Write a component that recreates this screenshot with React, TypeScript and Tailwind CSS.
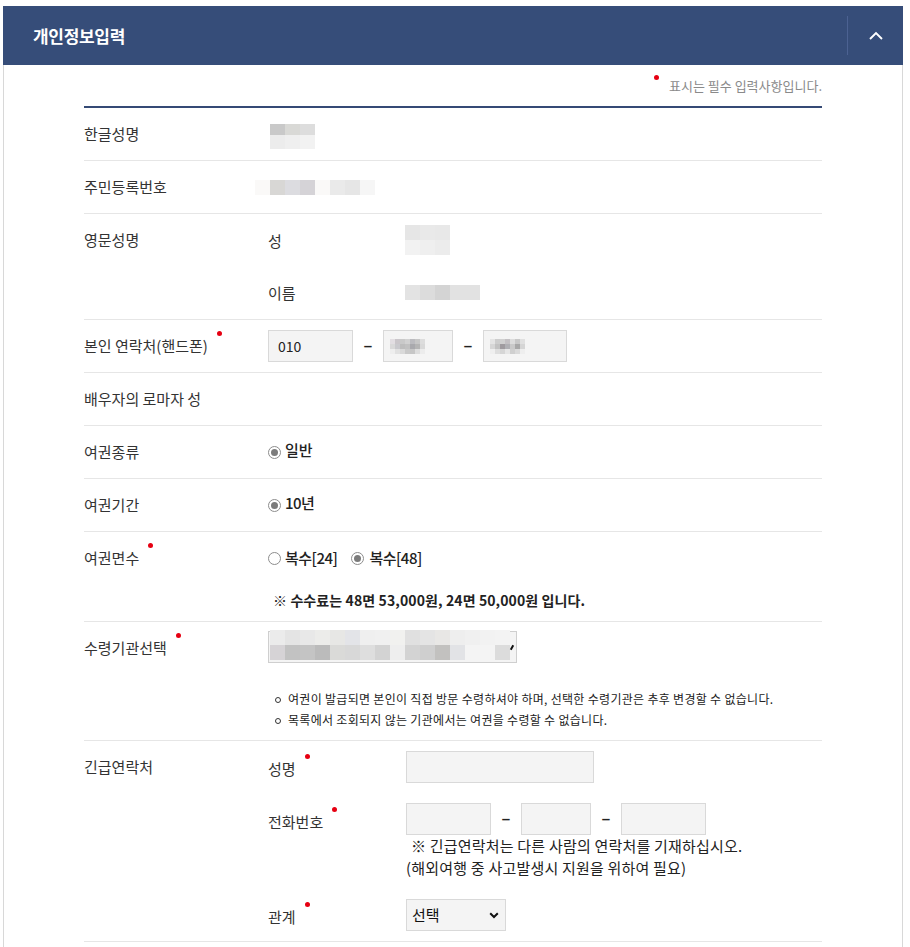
import React from "react";

type PixProps = { cols: number[]; rows: number[]; colors: string[][] };
const Pix = ({ cols, rows, colors }: PixProps) => (
  <div className="flex flex-col">
    {colors.map((r, i) => (
      <div className="flex" key={i}>
        {r.map((c, j) => (
          <div key={j} style={{ width: cols[j], height: rows[i], background: c }} />
        ))}
      </div>
    ))}
  </div>
);

const Dot = () => (
  <span className="absolute -right-[14px] -top-[5px] h-[5px] w-[5px] rounded-full bg-[#e60012]" />
);

const Req = ({ children }: { children: React.ReactNode }) => (
  <span className="relative inline-block leading-[20px]">
    {children}
    <Dot />
  </span>
);

const Radio = ({ checked }: { checked?: boolean }) => (
  <span className="flex h-[13px] w-[13px] shrink-0 items-center justify-center rounded-full border border-[#8d8d8d] bg-white">
    {checked && <span className="h-[7px] w-[7px] rounded-full bg-[#7b7b7b]" />}
  </span>
);

const Dash = () => (
  <span className="flex w-[30px] justify-center font-['Liberation_Sans',sans-serif] text-[15px] font-bold text-[#222]">
    –
  </span>
);

const Box = ({ w, children }: { w: string; children?: React.ReactNode }) => (
  <div className={`${w} flex h-[32px] items-center border border-[#d9d9d9] bg-[#f4f4f4]`}>{children}</div>
);

const Row = ({
  label,
  children,
  className = "",
}: {
  label: React.ReactNode;
  children?: React.ReactNode;
  className?: string;
}) => (
  <div className={`flex border-b border-[#e6e6e6] ${className}`}>
    <div className="w-[184px] shrink-0 py-[16px] text-[15px] leading-[20px] text-[#333]">{label}</div>
    <div className="flex-1">{children}</div>
  </div>
);

const phone2 = [
  ["#e2dee2", "#cac6ca", "#c9c9c9", "#d1d1d1", "#bbbbbf", "#c6c6c6", "#dddddd"],
  ["#d9d9d9", "#c9c9cd", "#bdbdbd", "#c1c1c1", "#a9a9ad", "#b5b5b5", "#d9d9d9"],
  ["#eeeeee", "#e1e1e1", "#d9d9d9", "#c9c9c9", "#c6c6c6", "#dddddd", "#ececec"],
];
const phone3 = [
  ["#e4e4e4", "#cdcdcd", "#d0d0d0", "#c3c0c3", "#dcdcdc", "#c8c8c8", "#e0e0e0"],
  ["#d6d6d6", "#c2c2c2", "#9f9b9f", "#b0b0b4", "#c9c9c9", "#a8a8a8", "#d5d5d5"],
  ["#efefef", "#dedede", "#d6d6d6", "#e6e6e6", "#cfcfcf", "#dadada", "#eeeeee"],
];

const selTop = [
  "#ebebeb", "#e4e4e4", "#e8e8e8", "#ececea", "#e7e7e5", "#e3e4e8", "#efefef", "#f0f0f0",
  "#f1f1ef", "#e0e0e0", "#e4e4e4", "#e8e7e5", "#eeeeee", "#f0f0f0", "#f2f2f2", "#f3f3f3",
];
const selBot = [
  "#d6d3d6", "#c2c2c2", "#c4c4c4", "#bbbbbb", "#dadad8", "#d8d8d8", "#dedede", "#d3d3d3",
  "#eeeeee", "#d3d3d3", "#cfcfcf", "#c2c1bf", "#e2e3e6", "#f4f4f4", "#f4f4f4", "#dcdcdc",
];

export default function App() {
  return (
    <div className="min-h-[947px] w-[910px] bg-white font-['Noto_Sans_CJK_KR',sans-serif] text-[#333]">
      <div className="ml-[3px] w-[900px] pt-[6px]">
        {/* Header */}
        <div className="flex h-[59px] items-center justify-between bg-[#364d79]">
          <div className="pl-[30px] text-[17px] font-bold tracking-[-0.3px] text-white">개인정보입력</div>
          <div className="flex h-full items-center">
            <div className="h-[39px] w-px bg-[#4c6292]" />
            <div className="flex w-[55px] justify-center">
              <svg width="14" height="9" viewBox="0 0 14 9" fill="none">
                <path d="M1 8 L7 2 L13 8" stroke="white" strokeWidth="1.9" />
              </svg>
            </div>
          </div>
        </div>

        {/* Content */}
        <div className="border-x border-[#d8d8d8] px-[80px] pb-[20px]">
          <div className="flex justify-end pt-[11px]">
            <span className="mr-[10px] mt-[-1px] h-[5px] w-[5px] rounded-full bg-[#e60012]" />
            <span className="text-[13px] leading-[20px] text-[#8a8a8a]">표시는 필수 입력사항입니다.</span>
          </div>
          <div className="mt-[10px] border-t-2 border-[#354a75]">
            {/* 한글성명 */}
            <Row label="한글성명">
              <div className="ml-[2px] pt-[16px]">
                <Pix
                  cols={[15, 15, 15]}
                  rows={[11, 14]}
                  colors={[
                    ["#c9c9c9", "#d9d9d6", "#dddddd"],
                    ["#ececec", "#efefef", "#f2f2f2"],
                  ]}
                />
              </div>
            </Row>

            {/* 주민등록번호 */}
            <Row label="주민등록번호">
              <div className="-ml-[13px] pt-[19px]">
                <Pix
                  cols={[15, 15, 15, 15, 15, 15, 15, 15]}
                  rows={[15]}
                  colors={[["#faf9f8", "#d8d7d5", "#dcdce0", "#d5d3d7", "#faf9f8", "#eaeaea", "#e6e6e6", "#f6f6f6"]]}
                />
              </div>
            </Row>

            {/* 영문성명 */}
            <Row label="영문성명">
              <div className="grid grid-cols-[137px_1fr]">
                <div className="flex h-[53px] items-center text-[15px] leading-[20px]">성</div>
                <div className="pt-[11px]">
                  <Pix
                    cols={[15, 15, 15]}
                    rows={[15, 15]}
                    colors={[
                      ["#e6e6e6", "#e9e9e9", "#e8e8e8"],
                      ["#f2f2f2", "#efefef", "#ececec"],
                    ]}
                  />
                </div>
                <div className="flex h-[52px] items-center text-[15px] leading-[20px]">이름</div>
                <div className="pt-[18px]">
                  <Pix cols={[15, 15, 15, 30]} rows={[15]} colors={[["#e3e3e3", "#dcdcdc", "#d4d4d4", "#e2e2e2"]]} />
                </div>
              </div>
            </Row>

            {/* 본인 연락처 */}
            <Row label={<Req>본인 연락처(핸드폰)</Req>}>
              <div className="flex h-[52px] items-center">
                <Box w="w-[85px]">
                  <span className="pl-[9px] text-[14px] text-[#222]">010</span>
                </Box>
                <Dash />
                <Box w="w-[70px]">
                  <div className="pl-[6px]">
                    <Pix cols={[5, 5, 5, 5, 5, 5, 5]} rows={[5, 5, 5]} colors={phone2} />
                  </div>
                </Box>
                <Dash />
                <Box w="w-[84px]">
                  <div className="pl-[6px]">
                    <Pix cols={[5, 5, 5, 5, 5, 5, 5]} rows={[5, 5, 5]} colors={phone3} />
                  </div>
                </Box>
              </div>
            </Row>

            {/* 배우자 */}
            <Row label="배우자의 로마자 성" />

            {/* 여권종류 */}
            <Row label="여권종류">
              <div className="flex h-[52px] items-center gap-[4px]">
                <Radio checked />
                <span className="-mt-[3px] text-[15px] font-medium text-[#222]">일반</span>
              </div>
            </Row>

            {/* 여권기간 */}
            <Row label="여권기간">
              <div className="flex h-[52px] items-center gap-[4px]">
                <Radio checked />
                <span className="-mt-[3px] text-[15px] font-medium tracking-[-0.5px] text-[#222]">10년</span>
              </div>
            </Row>

            {/* 여권면수 */}
            <Row label={<Req>여권면수</Req>}>
              <div className="flex h-[52px] items-center">
                <Radio />
                <span className="ml-[4px] text-[15px] font-medium tracking-[-0.5px] text-[#222]">복수[24]</span>
                <span className="ml-[14px]" />
                <Radio checked />
                <span className="ml-[5px] text-[15px] font-medium tracking-[-0.5px] text-[#222]">복수[48]</span>
              </div>
              <div className="mt-[6px] pb-[11px] pl-[5px] text-[14px] font-semibold leading-[20px] tracking-[0.1px] text-[#222]">
                ※ 수수료는 48면 53,000원, 24면 50,000원 입니다.
              </div>
            </Row>

            {/* 수령기관선택 */}
            <Row label={<Req>수령기관선택</Req>}>
              <div className="pt-[9px]">
                <div className="flex h-[32px] w-[249px] items-start border border-[#cfcfcf] bg-[#f4f4f4]">
                  <div className="relative -mt-[2px] ml-[1px]">
                    <Pix cols={selTop.map(() => 15)} rows={[15, 15]} colors={[selTop, selBot]} />
                  </div>
                  <span className="ml-[1px] mt-[13px] h-[5px] w-[2px] rotate-[30deg] bg-[#111]" />
                </div>
              </div>
              <div className="mt-[25px] pb-[10px] text-[12px] leading-[21px] tracking-[0.3px] text-[#222]">
                <div className="flex items-center pl-[7px]">
                  <span className="mr-[7px] mt-[2px] h-[6px] w-[6px] shrink-0 rounded-full border border-[#333]" />
                  여권이 발급되면 본인이 직접 방문 수령하셔야 하며, 선택한 수령기관은 추후 변경할 수 없습니다.
                </div>
                <div className="flex items-center pl-[7px]">
                  <span className="mr-[7px] mt-[2px] h-[6px] w-[6px] shrink-0 rounded-full border border-[#333]" />
                  목록에서 조회되지 않는 기관에서는 여권을 수령할 수 없습니다.
                </div>
              </div>
            </Row>

            {/* 긴급연락처 */}
            <Row label="긴급연락처">
              <div className="grid grid-cols-[138px_1fr] pb-[10px] pt-[10px] text-[15px] leading-[20px]">
                <div className="flex h-[32px] items-center pt-[3px]">
                  <Req>성명</Req>
                </div>
                <div>
                  <Box w="w-[188px]" />
                </div>

                <div className="mt-[20px] flex h-[32px] items-center pt-[6px]">
                  <Req>전화번호</Req>
                </div>
                <div className="mt-[20px]">
                  <div className="flex items-center">
                    <Box w="w-[85px]" />
                    <Dash />
                    <Box w="w-[70px]" />
                    <Dash />
                    <Box w="w-[85px]" />
                  </div>
                  <div className="text-[15px] leading-[22px] tracking-[0.2px] text-[#222]">
                    <div className="pl-[5px]">※ 긴급연락처는 다른 사람의 연락처를 기재하십시오.</div>
                    <div>(해외여행 중 사고발생시 지원을 위하여 필요)</div>
                  </div>
                </div>

                <div className="mt-[20px] flex h-[32px] items-center pt-[3px]">
                  <Req>관계</Req>
                </div>
                <div className="mt-[20px]">
                  <div className="flex h-[32px] w-[100px] items-center justify-between border border-[#d9d9d9] bg-[#f4f4f4] pl-[5px] pr-[6px]">
                    <span className="text-[15px] text-[#111]">선택</span>
                    <svg width="10" height="7" viewBox="0 0 10 7" fill="none">
                      <path d="M1.2 1.2 L5 5 L8.8 1.2" stroke="#111" strokeWidth="2" />
                    </svg>
                  </div>
                </div>
              </div>
            </Row>
          </div>
        </div>
      </div>
    </div>
  );
}
